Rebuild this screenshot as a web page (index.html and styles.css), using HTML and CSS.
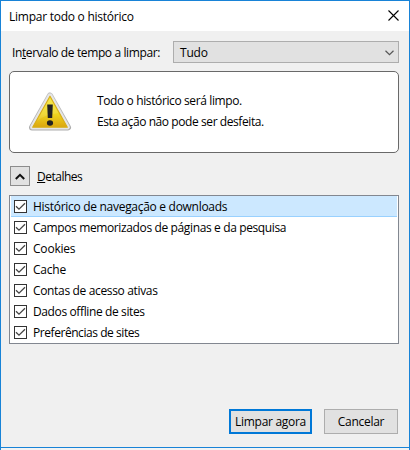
FILE: index.html
```html
<!DOCTYPE html>
<html lang="pt-BR">
<head>
    <meta charset="UTF-8">
    <meta name="viewport" content="width=device-width, initial-scale=1.0">
    <title>Limpar todo o histórico</title>
    <link rel="stylesheet" href="styles.css">
</head>
<body>
    <div class="dialog">
        <div class="titlebar">
            <span class="title">Limpar todo o histórico</span>
            <svg class="close" width="11" height="11" viewBox="0 0 11 11">
                <path d="M0.5 0.5L10.5 10.5M10.5 0.5L0.5 10.5" fill="none" stroke="#000" stroke-width="1.1"/>
            </svg>
        </div>

        <div class="content">
            <div class="range">
                <label class="range-label">In<u>t</u>ervalo de tempo a limpar:</label>
                <div class="select">
                    <span class="select-text">Tudo</span>
                    <svg width="9" height="6" viewBox="0 0 9 6">
                        <path d="M0.5 0.8L4.5 4.6L8.5 0.8" fill="none" stroke="#555" stroke-width="1.2"/>
                    </svg>
                </div>
            </div>

            <div class="warning">
                <svg class="warning-icon" width="44" height="40" viewBox="0 0 44 40">
                    <defs>
                        <linearGradient id="rim" x1="0" y1="0" x2="0" y2="1">
                            <stop offset="0" stop-color="#c4c4c4"/>
                            <stop offset="1" stop-color="#adadad"/>
                        </linearGradient>
                        <linearGradient id="fill" x1="0" y1="0" x2="0" y2="1">
                            <stop offset="0" stop-color="#f4e636"/>
                            <stop offset="0.55" stop-color="#f0d820"/>
                            <stop offset="1" stop-color="#dba60e"/>
                        </linearGradient>
                    </defs>
                    <path d="M22 3.5L40 35.5H4Z" fill="url(#rim)" stroke="url(#rim)" stroke-width="6" stroke-linejoin="round"/>
                    <path d="M22 3.7L39.7 35.2H4.3Z" fill="#e6e6e6" stroke="#e6e6e6" stroke-width="4.4" stroke-linejoin="round"/>
                    <path d="M22 4.2L39.3 35.2H4.7Z" fill="url(#fill)" stroke="#d8ae18" stroke-width="1.2" stroke-linejoin="round"/>
                    <path d="M14.8 18L22 5.5L30.5 21Q18 22 8.8 29Z" fill="#fff" opacity="0.12"/>
                    <path d="M19.2 12.5H24.8L24.2 26H19.8Z" fill="#222"/>
                    <ellipse cx="22" cy="31" rx="3.1" ry="2.8" fill="#222"/>
                </svg>
                <div class="warning-text">
                    <p class="line1">Todo o histórico será limpo.</p>
                    <p class="line2">Esta ação não pode ser desfeita.</p>
                </div>
            </div>

            <div class="details">
                <button class="expander">
                    <svg width="10" height="7" viewBox="0 0 10 7">
                        <path d="M0.8 6L5 1.8L9.2 6" fill="none" stroke="#111" stroke-width="2"/>
                    </svg>
                </button>
                <span class="details-label"><u>D</u>etalhes</span>
            </div>

            <ul class="items">
                <li class="item selected"><span class="check"><svg width="11" height="11" viewBox="0 0 11 11"><path d="M1 5.2L4 8.2L10 2.2"/></svg></span><span class="item1">Histórico de navegação e downloads</span></li>
                <li class="item"><span class="check"><svg width="11" height="11" viewBox="0 0 11 11"><path d="M1 5.2L4 8.2L10 2.2"/></svg></span><span class="item2">Campos memorizados de páginas e da pesquisa</span></li>
                <li class="item"><span class="check"><svg width="11" height="11" viewBox="0 0 11 11"><path d="M1 5.2L4 8.2L10 2.2"/></svg></span><span class="item3">Cookies</span></li>
                <li class="item"><span class="check"><svg width="11" height="11" viewBox="0 0 11 11"><path d="M1 5.2L4 8.2L10 2.2"/></svg></span><span class="item4">Cache</span></li>
                <li class="item"><span class="check"><svg width="11" height="11" viewBox="0 0 11 11"><path d="M1 5.2L4 8.2L10 2.2"/></svg></span><span class="item5">Contas de acesso ativas</span></li>
                <li class="item"><span class="check"><svg width="11" height="11" viewBox="0 0 11 11"><path d="M1 5.2L4 8.2L10 2.2"/></svg></span><span class="item6">Dados offline de sites</span></li>
                <li class="item"><span class="check"><svg width="11" height="11" viewBox="0 0 11 11"><path d="M1 5.2L4 8.2L10 2.2"/></svg></span><span class="item7">Preferências de sites</span></li>
            </ul>

            <div class="buttons">
                <button class="btn btn-default">Limpar agora</button>
                <button class="btn btn-cancel">Cancelar</button>
            </div>
        </div>
    </div>
</body>
</html>
```
FILE: styles.css
```css
* {
    margin: 0;
    padding: 0;
    box-sizing: border-box;
}

body {
    width: 410px;
    height: 450px;
    overflow: hidden;
    background: #f3f3f3;
    border-left: 1px solid #1883d7;
    border-right: 1px solid #1883d7;
    font-family: "Open Sans", "Noto Sans", sans-serif;
    font-size: 12px;
    line-height: 16px;
    letter-spacing: -0.2px;
    color: #000;
    white-space: nowrap;
}

.dialog {
    height: 448px;
    background: #f0f0f0;
    border-top: 1px solid #1883d7;
    border-bottom: 1px solid #1883d7;
}

.titlebar {
    display: flex;
    justify-content: space-between;
    align-items: center;
    height: 30px;
    padding: 0 10px 0 8px;
    background: #fff;
}

.title {
    padding-top: 1px;
    letter-spacing: -0.25px;
}

.close {
    margin-bottom: 2px;
}

.content {
    padding: 10px 10px 0 8px;
}

.range {
    display: flex;
    align-items: center;
    height: 22px;
    padding-left: 3px;
}

.range-label {
    width: 161px;
    padding-top: 1px;
    letter-spacing: -0.38px;
}

u {
    text-underline-offset: 1px;
    text-decoration-thickness: 1px;
}

.select {
    display: flex;
    flex: 1;
    justify-content: space-between;
    align-items: center;
    height: 22px;
    padding: 1px 4px 0 6px;
    background: #e1e1e1;
    border: 1px solid #adadad;
}

.warning {
    display: flex;
    height: 82px;
    margin-top: 8px;
    padding: 20px 0 0 18px;
    background: #fff;
    border: 1px solid #696969;
    border-radius: 5px;
}

.warning-text {
    margin-top: -2px;
    padding-left: 25px;
    line-height: 21px;
}

.line1 {
    letter-spacing: -0.38px;
}

.line2 {
    letter-spacing: -0.42px;
}

.details {
    display: flex;
    align-items: center;
    margin-top: 13px;
    padding-left: 1px;
}

.details-label {
    padding-top: 2px;
    letter-spacing: -0.5px;
}

.expander {
    display: flex;
    justify-content: center;
    align-items: center;
    width: 20px;
    height: 20px;
    margin-right: 7px;
    background: #e1e1e1;
    border: 1px solid #8c8c8c;
}

.items {
    height: 149px;
    margin-top: 9px;
    padding: 0 1px;
    background: #fff;
    border: 1px solid #828790;
    list-style: none;
}

.item {
    display: flex;
    align-items: center;
    height: 21px;
    padding: 1px 3px 0;
    border-bottom: 1px solid transparent;
}

.item1 {
    letter-spacing: -0.29px;
}

.item2 {
    letter-spacing: -0.37px;
}

.item5 {
    letter-spacing: -0.34px;
}

.item6 {
    letter-spacing: -0.38px;
}

.item7 {
    letter-spacing: -0.44px;
}

.selected {
    background: #cce8ff;
    border-color: #99d1ff;
}

.check {
    width: 13px;
    height: 13px;
    margin-right: 6px;
    background: #fff;
    border: 1px solid #333;
}

.check svg {
    display: block;
    fill: none;
    stroke: #444;
    stroke-width: 1.3;
}

.buttons {
    display: flex;
    justify-content: flex-end;
    margin-top: 65px;
    padding-right: 1px;
    gap: 12px;
}

.btn {
    width: 74px;
    height: 25px;
    background: #e1e1e1;
    border: 1px solid #adadad;
    font: inherit;
    letter-spacing: -0.3px;
}

.btn-default {
    width: 83px;
    border: 2px solid #0078d7;
}
```
